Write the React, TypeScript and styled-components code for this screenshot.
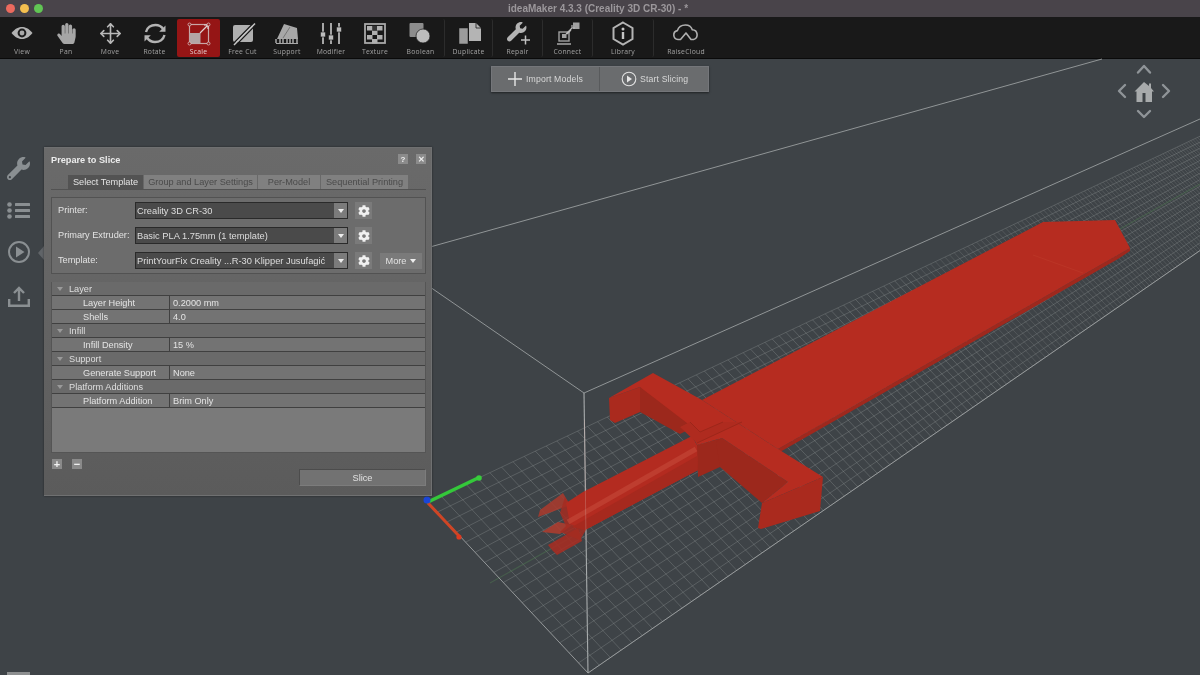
import React, { useMemo } from "react";
import styled, { createGlobalStyle } from "styled-components";
import { FaCog, FaHandPaper, FaWrench } from "react-icons/fa";
import { Move } from "lucide-react";

const Global = createGlobalStyle`
  html, body { margin: 0; padding: 0; background: #3e4347; overflow: hidden; }
  #root { width: 1200px; height: 675px; }
  * { box-sizing: border-box; }
`;

const Page = styled.div`
  width: 1200px;
  height: 675px;
  display: flex;
  flex-direction: column;
  overflow: hidden;
  font-family: "Liberation Sans", Arial, sans-serif;
  filter: blur(0.45px);
`;

const TitleBar = styled.header`
  height: 17px;
  flex: none;
  position: relative;
  display: flex;
  align-items: center;
  justify-content: center;
  background: #49444a;
`;
const Lights = styled.div`
  position: absolute;
  left: 6px;
  top: 3.5px;
  display: flex;
  gap: 5px;
`;
const Light = styled.span<{ $c: string }>`
  width: 9px;
  height: 9px;
  border-radius: 50%;
  background: ${(p) => p.$c};
`;
const Title = styled.div`
  margin-left: -4px;
  font-size: 10px;
  font-weight: 700;
  color: #9b979b;
`;

const Toolbar = styled.nav`
  height: 42px;
  flex: none;
  display: flex;
  align-items: stretch;
  background: #191919;
  border-bottom: 1px solid #0a0a0a;
`;
const Tool = styled.div<{ $w: number; $active?: boolean; $sep?: boolean }>`
  width: ${(p) => p.$w}px;
  flex: none;
  display: flex;
  flex-direction: column;
  align-items: center;
  padding-top: 2px;
  margin: 2px 0 1px;
  border-radius: 2px;
  background: ${(p) => (p.$active ? "#951515" : "transparent")};
  border-right: ${(p) => (p.$sep ? "1px solid #2c2c2c" : "none")};
`;
const ToolIcon = styled.svg`
  width: 30px;
  height: 25px;
  display: block;
  flex: none;
`;
const ToolGlyph = styled.div<{ $c: string }>`
  width: 30px;
  height: 25px;
  flex: none;
  display: flex;
  align-items: center;
  justify-content: center;
  color: ${(p) => p.$c};
`;
const ToolLabel = styled.span<{ $active?: boolean }>`
  margin-top: 1px;
  font-family: "Open Sans", sans-serif;
  font-size: 6.8px;
  line-height: 10px;
  letter-spacing: 0.25px;
  white-space: nowrap;
  color: ${(p) => (p.$active ? "#e6cfcf" : "#a2a2a2")};
`;

const Viewport = styled.main`
  flex: 1;
  position: relative;
  background: #3e4347;
`;
const SceneSvg = styled.svg`
  position: absolute;
  left: 0;
  top: -59px;
  width: 1200px;
  height: 675px;
`;

const ActionBar = styled.div`
  position: absolute;
  left: 491px;
  top: 7px;
  width: 218px;
  height: 26px;
  display: flex;
  background: #6a6c6e;
  border: 1px solid #74767a;
  box-shadow: 0 1px 2px rgba(0, 0, 0, 0.5);
`;
const ActionBtn = styled.div<{ $w: number; $pad: number; $sep?: boolean }>`
  width: ${(p) => p.$w}px;
  display: flex;
  align-items: center;
  gap: 3px;
  padding-left: ${(p) => p.$pad}px;
  font-size: 8.7px;
  color: #d8d8d8;
  letter-spacing: 0.15px;
  white-space: nowrap;
  border-right: ${(p) => (p.$sep ? "1px solid #585a5c" : "none")};
`;

const NavPad = styled.svg`
  position: absolute;
  left: 1112px;
  top: 3px;
  width: 64px;
  height: 64px;
`;

const SideRail = styled.aside`
  position: absolute;
  left: 7px;
  top: 98px;
  width: 23px;
  display: flex;
  flex-direction: column;
  align-items: center;
  gap: 22px;
  color: #8a8f92;
`;
const RailPointer = styled.span`
  position: absolute;
  left: 38px;
  top: 187px;
  width: 0;
  height: 0;
  border-top: 7px solid transparent;
  border-bottom: 7px solid transparent;
  border-right: 6px solid #606468;
`;
const CornerTab = styled.span`
  position: absolute;
  left: 7px;
  bottom: 0;
  width: 23px;
  height: 3px;
  background: #8d8f90;
`;

const Dialog = styled.section`
  position: absolute;
  left: 44px;
  top: 88px;
  width: 388px;
  height: 349px;
  padding: 0 5px 0 7px;
  display: flex;
  flex-direction: column;
  background: linear-gradient(#6a6a6a, #626262 60%, #5b5b5b);
  border: 1px solid #6f7071;
  border-left-width: 0;
  box-shadow: 0 0 2px rgba(0, 0, 0, 0.45);
`;
const DialogHead = styled.div`
  height: 24px;
  flex: none;
  display: flex;
  align-items: center;
  gap: 8px;
`;
const DialogTitle = styled.div`
  flex: 1;
  font-size: 9.2px;
  font-weight: 700;
  color: #ececec;
`;
const HeadBtn = styled.div`
  width: 10px;
  height: 10px;
  margin-top: -2px;
  display: flex;
  align-items: center;
  justify-content: center;
  background: #8b8b8b;
  color: #efefef;
  font-size: 8px;
  font-weight: 700;
`;
const Tabs = styled.div`
  margin-top: 3px;
  height: 15px;
  flex: none;
  display: flex;
  gap: 1px;
  padding-left: 17px;
  border-bottom: 1px solid #525252;
`;
const Tab = styled.div<{ $w: number; $active?: boolean }>`
  width: ${(p) => p.$w}px;
  display: flex;
  align-items: center;
  justify-content: center;
  font-size: 9.2px;
  white-space: nowrap;
  background: ${(p) => (p.$active ? "#535353" : "#808080")};
  color: ${(p) => (p.$active ? "#e4e4e4" : "#4a4a4a")};
`;
const FormBox = styled.div`
  margin-top: 7px;
  height: 77px;
  flex: none;
  display: flex;
  flex-direction: column;
  gap: 8px;
  padding: 4px 3px 0 6px;
  background: #6c6c6c;
  border: 1px solid #525252;
`;
const FormRow = styled.div`
  height: 17px;
  display: flex;
  align-items: center;
`;
const FormLabel = styled.label`
  width: 77px;
  flex: none;
  margin-top: -2px;
  font-size: 9.2px;
  color: #e2e2e2;
  white-space: nowrap;
`;
const Select = styled.div`
  width: 213px;
  height: 17px;
  flex: none;
  display: flex;
  background: #4a4a4a;
  border: 1px solid #2a2a2a;
  font-size: 9.3px;
  color: #dedede;
`;
const SelectText = styled.span`
  flex: 1;
  padding-left: 1px;
  line-height: 16px;
  white-space: nowrap;
  overflow: hidden;
`;
const SelectArrow = styled.span`
  width: 13px;
  flex: none;
  display: flex;
  align-items: center;
  justify-content: center;
  background: #7b7b7b;
  &::after {
    content: "";
    border-top: 4px solid #eee;
    border-left: 3px solid transparent;
    border-right: 3px solid transparent;
  }
`;
const GearBtn = styled.div`
  width: 17px;
  height: 17px;
  margin-left: 7px;
  flex: none;
  display: flex;
  align-items: center;
  justify-content: center;
  background: #7a7a7a;
  color: #f0f0f0;
`;
const MoreBtn = styled.div`
  width: 42px;
  height: 16px;
  margin-left: 8px;
  flex: none;
  display: flex;
  align-items: center;
  justify-content: center;
  gap: 4px;
  background: #7a7a7a;
  font-size: 9.2px;
  color: #e2e2e2;
  &::after {
    content: "";
    border-top: 4px solid #eee;
    border-left: 3.5px solid transparent;
    border-right: 3.5px solid transparent;
  }
`;
const Tree = styled.div`
  margin-top: 8px;
  height: 171px;
  flex: none;
  display: flex;
  flex-direction: column;
  background: #7a7a7a;
  border: 1px solid #555;
  border-top: 0;
`;
const Section = styled.div`
  height: 14px;
  flex: none;
  display: flex;
  align-items: center;
  gap: 6px;
  padding: 1px 0 0 5px;
  background: #6a6a6a;
  border-bottom: 1px solid #404040;
  font-size: 9.2px;
  color: #dfdfdf;
  &::before {
    content: "";
    border-top: 4px solid #9a9a9a;
    border-left: 3px solid transparent;
    border-right: 3px solid transparent;
  }
`;
const PropRow = styled.div`
  height: 14px;
  flex: none;
  display: flex;
  background: #737373;
  border-bottom: 1px solid #404040;
  font-size: 9.2px;
  line-height: 15px;
  color: #e4e4e4;
`;
const PropName = styled.span`
  width: 118px;
  flex: none;
  padding-left: 31px;
  border-right: 1px solid #404040;
  white-space: nowrap;
`;
const PropValue = styled.span`
  padding-left: 3px;
`;
const DialogFoot = styled.div`
  flex: 1;
  display: flex;
  align-items: flex-start;
  gap: 10px;
  padding: 6px 0 0 1px;
`;
const SmallBtn = styled.div`
  width: 10px;
  height: 10px;
  display: flex;
  align-items: center;
  justify-content: center;
  background: #8a8a8a;
  color: #f2f2f2;
  font-size: 11px;
  line-height: 10px;
  font-weight: 700;
`;
const SliceBtn = styled.div`
  margin: 10px 0 0 auto;
  width: 127px;
  height: 17px;
  display: flex;
  align-items: center;
  justify-content: center;
  background: #727272;
  border: 1px solid #4c4c4c;
  border-right-color: #7c7c7c;
  border-bottom-color: #7c7c7c;
  font-size: 9.2px;
  color: #e2e2e2;
`;

/* ---- toolbar drawings ---- */
const I = ({ children }: { children: React.ReactNode }) => (
  <ToolIcon viewBox="0 0 30 25">{children}</ToolIcon>
);
const ViewIcon = () => (
  <I>
    <path d="M4.500 12C8 7.500 12 6 15 6s7 1.500 10.500 6C22 16.500 18 18 15 18s-7-1.500-10.500-6Z" fill="#b2b2b2" />
    <circle cx="15" cy="12" r="4.400" fill="#1c1c1c" />
    <circle cx="15" cy="12" r="2.400" fill="#a8a8a8" />
  </I>
);
const PanIcon = () => (
  <ToolGlyph $c="#a6a6a6">
    <FaHandPaper size={21} />
  </ToolGlyph>
);
const MoveIcon = () => (
  <ToolGlyph $c="#b8b8b8">
    <Move size={23} strokeWidth={1.7} />
  </ToolGlyph>
);
const RotateIcon = () => (
  <I>
    <path d="M6 11C7 6.500 11 4 15.500 4c3.400 0 6 1.500 7.700 4" fill="none" stroke="#b4b4b4" strokeWidth="2.400" />
    <path d="M25.500 4.500v6.300h-6.300Z" fill="#b4b4b4" />
    <path d="M24.500 14c-1 4.500-5 7-9.500 7-3.400 0-6-1.500-7.700-4" fill="none" stroke="#b4b4b4" strokeWidth="2.400" />
    <path d="M4.500 20.500v-6.300h6.300Z" fill="#b4b4b4" />
  </I>
);
const ScaleIcon = () => (
  <I>
    <rect x="5.500" y="3.500" width="19" height="19" fill="none" stroke="#c9a6a6" strokeWidth="1.200" />
    <rect x="5.500" y="12" width="11" height="10.500" fill="#b3a4a4" />
    <path d="M16 12l8-8M24 4h-4M24 4v4" stroke="#e0d0d0" strokeWidth="1.200" fill="none" />
    {[[5.5, 3.5], [24.5, 3.5], [5.5, 22.5], [24.5, 22.5]].map(([x, y]) => (
      <circle key={`${x}${y}`} cx={x} cy={y} r="1.500" fill="#951515" stroke="#d5bdbd" strokeWidth="0.800" />
    ))}
  </I>
);
const CutIcon = () => (
  <I>
    <rect x="5" y="4" width="20" height="17" rx="2" fill="#b0b0b0" />
    <path d="M4 24L25 2.500M8 24L29 2.500" stroke="#191919" strokeWidth="1.300" />
    <path d="M6 24L27 2.500" stroke="#c6c6c6" strokeWidth="1.500" />
  </I>
);
const SupportIcon = () => (
  <I>
    <path d="M5 18L12 3l13 4 1 11Z" fill="#a8a8a8" />
    <path d="M4 22V18M8 22V15M11 22V17M15 22V18M18 22V17M21 22V16M25 22v-5" stroke="#a8a8a8" strokeWidth="1.500" />
    <path d="M4 22.500h22" stroke="#a8a8a8" strokeWidth="1" />
    <path d="M11 17l7-11" stroke="#6a6a6a" strokeWidth="0.800" />
  </I>
);
const ModifierIcon = () => (
  <I>
    {[7, 15, 23].map((x) => (
      <path key={x} d={`M${x} 2v21`} stroke="#a6a6a6" strokeWidth="2" />
    ))}
    <rect x="4.500" y="11" width="5" height="5" rx="1" fill="#bcbcbc" stroke="#191919" strokeWidth="0.600" />
    <rect x="12.500" y="14" width="5" height="5" rx="1" fill="#bcbcbc" stroke="#191919" strokeWidth="0.600" />
    <rect x="20.500" y="6" width="5" height="5" rx="1" fill="#bcbcbc" stroke="#191919" strokeWidth="0.600" />
  </I>
);
const TextureIcon = () => (
  <I>
    <rect x="5" y="3" width="20" height="19" fill="none" stroke="#a8a8a8" strokeWidth="1.800" />
    {[[7, 5], [17, 5], [12, 9.5], [7, 14], [17, 14], [12, 18]].map(([x, y]) => (
      <rect key={`${x}-${y}`} x={x} y={y} width="5.500" height="4.500" fill="#b0b0b0" />
    ))}
    <rect x="12.500" y="5" width="4.500" height="4.500" fill="#333" />
  </I>
);
const BooleanIcon = () => (
  <I>
    <rect x="3.500" y="2" width="14" height="14" rx="1" fill="#8c8c8c" />
    <circle cx="17" cy="15" r="7" fill="#bcbcbc" stroke="#191919" strokeWidth="0.700" />
  </I>
);
const DuplicateIcon = () => (
  <I>
    <path d="M15 2h7l5 5v13H15Z" fill="#b4b4b4" />
    <path d="M22 2v5h5" fill="none" stroke="#191919" strokeWidth="0.800" />
    <path d="M5 7h9v16H5Z" fill="#9c9c9c" stroke="#191919" strokeWidth="0.500" />
  </I>
);
const RepairIcon = () => (
  <I>
    <g transform="translate(4 1) scale(0.038)">
      <path
        fill="#b4b4b4"
        d="M507.730 109.100c-2.240-9.030-13.540-12.090-20.120-5.510l-74.360 74.360-67.880-11.310-11.310-67.880 74.360-74.360c6.620-6.620 3.430-17.900-5.660-20.160-47.380-11.740-99.550.91-136.580 37.930-39.640 39.640-50.550 97.100-34.050 147.200L18.740 402.760c-24.990 24.990-24.990 65.510 0 90.500 24.990 24.990 65.510 24.990 90.500 0l213.210-213.210c50.120 16.710 107.470 5.680 147.370-34.220 37.070-37.070 49.700-89.320 37.910-136.730z"
      />
    </g>
    <path d="M18 19h9M22.500 14.500v9" stroke="#c0c0c0" strokeWidth="1.500" />
  </I>
);
const ConnectIcon = () => (
  <I>
    <rect x="6" y="11" width="10" height="9" fill="none" stroke="#a0a0a0" strokeWidth="1.400" />
    <rect x="9" y="13" width="4.500" height="4" fill="#a0a0a0" />
    <path d="M4 23h14" stroke="#a0a0a0" strokeWidth="1.600" />
    <rect x="20" y="1.500" width="6.500" height="6.500" fill="#a0a0a0" />
    <path d="M13 13l6-6M19 7v-3M19 7h3M18 9l-4 4" stroke="#b8b8b8" strokeWidth="1.200" fill="none" />
  </I>
);
const LibraryIcon = () => (
  <I>
    <path d="M15 1.500l9.500 5.500v11L15 23.500 5.500 18V7Z" fill="none" stroke="#b4b4b4" strokeWidth="2" />
    <circle cx="15" cy="8" r="1.500" fill="#c6c6c6" />
    <path d="M15 11v7" stroke="#c6c6c6" strokeWidth="2.400" />
  </I>
);
const CloudIcon = () => (
  <I>
    <path
      d="M7 18.500a4.500 4.500 0 0 1-.6-8.900C7.500 6 11 4 14.500 4c3.200 0 5.800 1.900 6.800 4.700a5 5 0 0 1 1.200 9.800H20L15 12l-5.500 6.500Z"
      fill="none"
      stroke="#b0b0b0"
      strokeWidth="1.600"
      strokeLinejoin="round"
    />
  </I>
);

const tools: { l: string; w: number; icon: React.FC; active?: boolean; sep?: boolean }[] = [
  { l: "View", w: 44, icon: ViewIcon },
  { l: "Pan", w: 44, icon: PanIcon },
  { l: "Move", w: 44, icon: MoveIcon },
  { l: "Rotate", w: 45, icon: RotateIcon },
  { l: "Scale", w: 43, icon: ScaleIcon, active: true },
  { l: "Free Cut", w: 45, icon: CutIcon },
  { l: "Support", w: 44, icon: SupportIcon },
  { l: "Modifier", w: 44, icon: ModifierIcon },
  { l: "Texture", w: 44, icon: TextureIcon },
  { l: "Boolean", w: 48, icon: BooleanIcon, sep: true },
  { l: "Duplicate", w: 48, icon: DuplicateIcon, sep: true },
  { l: "Repair", w: 50, icon: RepairIcon, sep: true },
  { l: "Connect", w: 50, icon: ConnectIcon, sep: true },
  { l: "Library", w: 61, icon: LibraryIcon, sep: true },
  { l: "RaiseCloud", w: 64, icon: CloudIcon },
];

/* ---- 3D scene ---- */
const VP: [number, number] = [1728, -114];
const A: [number, number] = [428, 502];
const B: [number, number] = [588, 673];
const END = 0.62;
const lerp = (a: [number, number], b: [number, number], t: number): [number, number] => [
  a[0] + (b[0] - a[0]) * t,
  a[1] + (b[1] - a[1]) * t,
];
const seg = (p: [number, number], q: [number, number]) =>
  `M${p[0].toFixed(1)} ${p[1].toFixed(1)}L${q[0].toFixed(1)} ${q[1].toFixed(1)}`;

function Grid() {
  const { long, near, far } = useMemo(() => {
    const across = 17;
    const K = 100;
    const long: string[] = [];
    const near: string[] = [];
    const far: string[] = [];
    for (let u = 0; u <= across; u++) {
      const s = lerp(A, B, u / across);
      long.push(seg(s, lerp(s, VP, END)));
    }
    for (let i = 1; i <= 165; i++) {
      const t = i / (i + K);
      (i < 60 ? near : far).push(seg(lerp(A, VP, t), lerp(B, VP, t)));
    }
    return { long: long.join(""), near: near.join(""), far: far.join("") };
  }, []);
  return (
    <g fill="none">
      <path d={long} stroke="#8f9495" strokeOpacity="0.5" strokeWidth="0.7" />
      <path d={near} stroke="#8f9495" strokeOpacity="0.5" strokeWidth="0.7" />
      <path d={far} stroke="#8f9495" strokeOpacity="0.36" strokeWidth="0.7" />
      <path d="M490 583L1200 184" stroke="#4f7a52" strokeOpacity="0.45" strokeWidth="1.200" />
      <path d={`${seg(A, B)}${seg(B, lerp(B, VP, END))}`} stroke="#9ea2a3" strokeWidth="0.900" />
    </g>
  );
}

function Sword() {
  const base = "#b62c20";
  const mid = "#aa2a1e";
  const dark = "#9c281c";
  return (
    <g>
      {/* prongs */}
      <path d="M563 493L540 510 538 517 557 510 570 505Z" fill="#ab3a2d" opacity="0.85" />
      <path d="M558 522L542 532 560 534 572 525Z" fill="#b23c2e" opacity="0.85" />
      <path d="M578 528L548 545 552 550 557 555 582 541Z" fill="#a72c22" opacity="0.88" />
      <path d="M565 497L560 513 566 526 560 532 580 540 586 530Z" fill="#a52c21" opacity="0.85" />
      {/* handle */}
      <path d="M692 436L698 447 698 470 585 530 570 524 566 503 583 492Z" fill="#b32b20" />
      <path d="M697 456L698 470 585 530 572 527Z" fill="#a6291e" />
      <path d="M696 449L568 522" stroke="#c5493a" strokeOpacity="0.6" strokeWidth="5" fill="none" />
      {/* blade with lower side */}
      <path d="M778 449L1130 248 1130 251 1118 259 780 452Z" fill="#9f281d" />
      <path d="M702 400L1043 222 1115 220 1130 248 778 449Z" fill={base} />
      <path d="M1033 255L1083 273" stroke="#c64a36" strokeOpacity="0.4" strokeWidth="0.700" />
      {/* upper arm */}
      <path d="M609 398L610 420 615 423 640 412 640 387Z" fill={mid} />
      <path d="M640 387L640 412 680 434 692 428 700 420 660 392Z" fill={dark} />
      {/* central block and lower arm faces */}
      <path d="M697 445L698 477 720 467 722 438Z" fill={dark} />
      <path d="M716 442L720 467 762 503 788 482 722 438Z" fill={dark} />
      {/* top face of guard */}
      <path d="M653 373L609 398 640 387 687 423 697 445 722 438 788 482 762 503 823 477 778 449 702 400Z" fill={base} />
      {/* end of lower arm */}
      <path d="M762 503L758 528 761 529 820 511 823 477Z" fill={mid} />
      {/* cross piece */}
      <path d="M680 427L690 422 700 432 723 422 742 422 697 443Z" fill="#af2b1f" />
      <path d="M690 422L700 432 723 422M697 443L742 422" stroke="#9a261a" strokeWidth="0.900" fill="none" />
    </g>
  );
}

function Scene() {
  return (
    <SceneSvg viewBox="0 0 1200 675">
      <g stroke="#9a9e9f" strokeWidth="0.900" fill="none">
        <path d="M430 247L1102 59" />
        <path d="M584 393L1200 119" />
        <path d="M430 287L584 393" />
        <path d="M584 393L588 673" stroke="#a8acad" strokeWidth="1.100" />
      </g>
      <Grid />
      <Sword />
      <path d="M584.500 420L586 540" stroke="#d8b0a8" strokeOpacity="0.3" strokeWidth="1" />
      <path d="M428 502L478 478" stroke="#34c83a" strokeWidth="3.600" strokeLinecap="round" />
      <circle cx="479" cy="478" r="2.800" fill="#38cc3c" />
      <path d="M428 503L459 536" stroke="#cf4525" strokeWidth="3" />
      <circle cx="459" cy="537" r="2.600" fill="#dd3a20" />
      <circle cx="427" cy="500" r="3.500" fill="#1a46d8" />
    </SceneSvg>
  );
}

const Chevron = ({ d }: { d: string }) => (
  <path d={d} fill="none" stroke="#8f9498" strokeWidth="2.400" strokeLinecap="round" strokeLinejoin="round" />
);

const rows: ({ s: string } | { n: string; v: string })[] = [
  { s: "Layer" },
  { n: "Layer Height", v: "0.2000 mm" },
  { n: "Shells", v: "4.0" },
  { s: "Infill" },
  { n: "Infill Density", v: "15 %" },
  { s: "Support" },
  { n: "Generate Support", v: "None" },
  { s: "Platform Additions" },
  { n: "Platform Addition", v: "Brim Only" },
];

const form = [
  { l: "Printer:", v: "Creality 3D CR-30" },
  { l: "Primary Extruder:", v: "Basic PLA 1.75mm (1 template)" },
  { l: "Template:", v: "PrintYourFix Creality ...R-30 Klipper Jusufagić", more: true },
];

export default function App() {
  return (
    <Page>
      <Global />
      <TitleBar>
        <Lights>
          <Light $c="#ec6a5e" />
          <Light $c="#f4bf4f" />
          <Light $c="#61c554" />
        </Lights>
        <Title>ideaMaker 4.3.3 (Creality 3D CR-30) - *</Title>
      </TitleBar>
      <Toolbar>
        {tools.map((t) => (
          <Tool key={t.l} $w={t.w} $active={t.active} $sep={t.sep}>
            <t.icon />
            <ToolLabel $active={t.active}>{t.l}</ToolLabel>
          </Tool>
        ))}
      </Toolbar>
      <Viewport>
        <Scene />
        <ActionBar>
          <ActionBtn $w={108} $pad={15} $sep>
            <svg width="16" height="16" viewBox="0 0 16 16">
              <path d="M8 1v14M1 8h14" stroke="#e6e6e6" strokeWidth="1.400" />
            </svg>
            Import Models
          </ActionBtn>
          <ActionBtn $w={108} $pad={21}>
            <svg width="16" height="16" viewBox="0 0 16 16">
              <circle cx="8" cy="8" r="6.800" fill="none" stroke="#e2e2e2" strokeWidth="1.100" />
              <path d="M6 4.600l5 3.400-5 3.400Z" fill="#e6e6e6" />
            </svg>
            Start Slicing
          </ActionBtn>
        </ActionBar>

        <NavPad viewBox="0 0 64 64">
          <Chevron d="M26 10.500l6-6.500 6 6.500" />
          <Chevron d="M13 23l-6 6 6 6" />
          <Chevron d="M51 23l6 6-6 6" />
          <Chevron d="M26 49l6 6 6-6" />
          <path d="M32 20l5 4v-2.500h2V26l3 3.500h-2V40h-6.500v-9h-3v9h-6V29.500h-2Z" fill="#a8abac" />
        </NavPad>

        <SideRail>
          <FaWrench size={23} />
          <svg width="23" height="17" viewBox="0 0 23 17" fill="currentColor">
            <circle cx="2.500" cy="2.500" r="2.300" />
            <circle cx="2.500" cy="8.500" r="2.300" />
            <circle cx="2.500" cy="14.500" r="2.300" />
            <rect x="8" y="1" width="15" height="3" rx="0.500" />
            <rect x="8" y="7" width="15" height="3" rx="0.500" />
            <rect x="8" y="13" width="15" height="3" rx="0.500" />
          </svg>
          <svg width="22" height="22" viewBox="0 0 22 22">
            <circle cx="11" cy="11" r="10" fill="none" stroke="currentColor" strokeWidth="2" />
            <path d="M8 5.500l8.500 5.500L8 16.500Z" fill="currentColor" />
          </svg>
          <svg width="22" height="22" viewBox="0 0 22 22" fill="none" stroke="currentColor" strokeWidth="2.400">
            <path d="M11 16V3M6 8l5-5 5 5" />
            <path d="M1.200 14v6.800h19.600V14" />
          </svg>
        </SideRail>
        <RailPointer />
        <CornerTab />

        <Dialog>
          <DialogHead>
            <DialogTitle>Prepare to Slice</DialogTitle>
            <HeadBtn>?</HeadBtn>
            <HeadBtn>✕</HeadBtn>
          </DialogHead>
          <Tabs>
            <Tab $w={75} $active>
              Select Template
            </Tab>
            <Tab $w={113}>Group and Layer Settings</Tab>
            <Tab $w={62}>Per-Model</Tab>
            <Tab $w={87}>Sequential Printing</Tab>
          </Tabs>
          <FormBox>
            {form.map((f) => (
              <FormRow key={f.l}>
                <FormLabel>{f.l}</FormLabel>
                <Select>
                  <SelectText>{f.v}</SelectText>
                  <SelectArrow />
                </Select>
                <GearBtn>
                  <FaCog size={12} />
                </GearBtn>
                {f.more && <MoreBtn>More</MoreBtn>}
              </FormRow>
            ))}
          </FormBox>
          <Tree>
            {rows.map((r) =>
              "s" in r ? (
                <Section key={r.s}>{r.s}</Section>
              ) : (
                <PropRow key={r.n}>
                  <PropName>{r.n}</PropName>
                  <PropValue>{r.v}</PropValue>
                </PropRow>
              )
            )}
          </Tree>
          <DialogFoot>
            <SmallBtn>+</SmallBtn>
            <SmallBtn>−</SmallBtn>
            <SliceBtn>Slice</SliceBtn>
          </DialogFoot>
        </Dialog>
      </Viewport>
    </Page>
  );
}
